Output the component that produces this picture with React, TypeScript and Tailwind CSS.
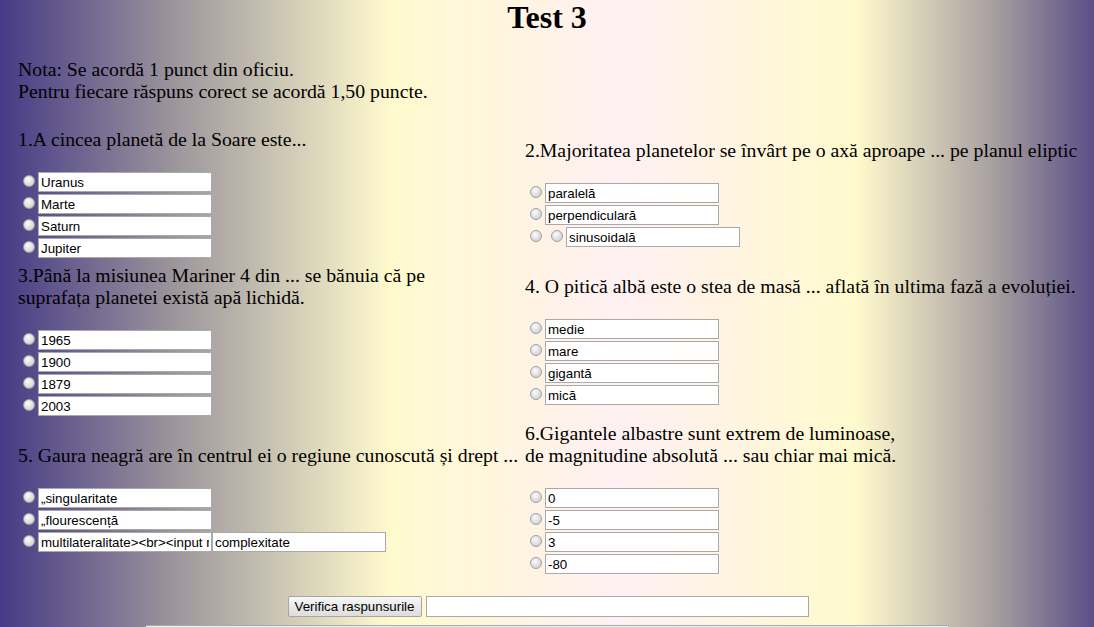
import React from "react";

const serif = "font-['Liberation_Serif','Times_New_Roman',serif]";
const sans = "font-['Liberation_Sans',Arial,sans-serif]";

function Radio({ className = "" }: { className?: string }) {
  return (
    <span
      className={`mt-[3px] block w-[12px] h-[12px] shrink-0 rounded-full border border-[#a0a0a0] bg-[radial-gradient(circle_at_40%_35%,#fbfbfb,#d6d6d6_70%)] ${className}`}
    />
  );
}

function Field({ v, w = "w-[174px]" }: { v: string; w?: string }) {
  return (
    <input
      type="text"
      readOnly
      defaultValue={v}
      className={`${w} h-[20px] shrink-0 border border-[#a9a9a9] bg-white px-[2px] text-[13.33px] leading-[18px] text-black outline-none ${sans}`}
    />
  );
}

function Option({ v }: { v: string }) {
  return (
    <div className="flex h-[20px] items-start">
      <Radio className="ml-[5px] mr-[3px]" />
      <Field v={v} />
    </div>
  );
}

function Question({
  title,
  options,
  extra,
}: {
  title: React.ReactNode;
  options: string[];
  extra?: React.ReactNode;
}) {
  return (
    <div className="flex flex-col">
      <div className="whitespace-nowrap">{title}</div>
      <div className="mt-[22px] flex flex-col gap-[2px]">
        {options.map((o) => (
          <Option key={o} v={o} />
        ))}
        {extra}
      </div>
    </div>
  );
}

export default function App() {
  return (
    <div
      className={`min-h-screen w-full bg-[linear-gradient(to_right,#463a86_0px,#9a939b_170px,#fffacd_390px,#fff0f3_620px,#fffacd_857px,#a39a9e_1000px,#5a4f86_1094px)] text-black ${serif}`}
    >
      <h1 className="text-center text-[32px] font-bold leading-[34px]">Test 3</h1>

      <div className="px-[18px] text-[19.75px] leading-[22px]">
        <div className="mt-[24px]">
          <div>Nota: Se acordă 1 punct din oficiu.</div>
          <div>Pentru fiecare răspuns corect se acordă 1,50 puncte.</div>
        </div>

        <div className="mt-[26px] grid grid-cols-[507px_1fr] items-center gap-y-[6px]">
          <Question
            title="1.A cincea planetă de la Soare este..."
            options={["Uranus", "Marte", "Saturn", "Jupiter"]}
          />
          <Question
            title="2.Majoritatea planetelor se învârt pe o axă aproape ... pe planul eliptic"
            options={["paralelă", "perpendiculară"]}
            extra={
              <div className="flex h-[20px] items-start">
                <Radio className="ml-[5px] mr-[9px]" />
                <Radio className="mr-[3px]" />
                <Field v="sinusoidală" />
              </div>
            }
          />

          <Question
            title={
              <>
                3.Până la misiunea Mariner 4 din ... se bănuia că pe
                <br />
                suprafața planetei există apă lichidă.
              </>
            }
            options={["1965", "1900", "1879", "2003"]}
          />
          <Question
            title="4. O pitică albă este o stea de masă ... aflată în ultima fază a evoluției."
            options={["medie", "mare", "gigantă", "mică"]}
          />

          <Question
            title="5. Gaura neagră are în centrul ei o regiune cunoscută și drept ..."
            options={["„singularitate", "„flourescență"]}
            extra={
              <div className="flex h-[20px] items-start">
                <Radio className="ml-[5px] mr-[3px]" />
                <Field v="multilateralitate><br><input name" />
                <Field v="complexitate" />
              </div>
            }
          />
          <Question
            title={
              <>
                6.Gigantele albastre sunt extrem de luminoase,
                <br />
                de magnitudine absolută ... sau chiar mai mică.
              </>
            }
            options={["0", "-5", "3", "-80"]}
          />
        </div>
      </div>

      <div className="mt-[22px] flex justify-center gap-[4px] pl-[2px]">
        <button
          className={`h-[21px] w-[134px] rounded-[2px] border border-[#a6a6a6] bg-[linear-gradient(#f7f7f7,#dddddd)] text-[13.33px] leading-[19px] text-black ${sans}`}
        >
          Verifica raspunsurile
        </button>
        <input
          type="text"
          readOnly
          className="h-[21px] w-[383px] border border-[#a9a9a9] bg-white outline-none"
        />
      </div>

      <div className="mx-auto mt-[8px] h-[60px] w-[802px] border-t border-[#a9a9a9] bg-[#eeeeee]" />
    </div>
  );
}
